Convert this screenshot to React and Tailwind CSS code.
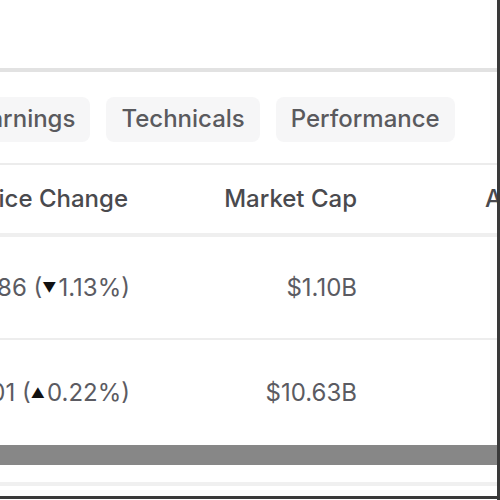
import React from "react";

const tabs = ["Earnings", "Technicals", "Performance"];

const rows = [
  { change: "-0.86", pct: "1.13%", up: false, cap: "$1.10B" },
  { change: "+0.01", pct: "0.22%", up: true, cap: "$10.63B" },
];

export default function App() {
  return (
    <div
      className="relative w-[500px] h-[500px] overflow-hidden bg-white border-r-[3px] border-[#3a3a3a] text-[#4f4f4f]"
      style={{ fontFamily: "Inter, 'Liberation Sans', sans-serif" }}
    >
      <div className="h-[68px]" />
      <div className="h-[4px] bg-[#e2e2e2]" />

      {/* tab strip */}
      <div className="h-[91px] flex items-center">
        <div className="flex gap-[16px] ml-[-40px] mt-[3px] shrink-0">
          {tabs.map((t) => (
            <div
              key={t}
              className="h-[45px] px-[15px] flex items-center shrink-0 rounded-lg bg-[#f6f6f7] text-[24px] font-medium text-[#5a5a5e] whitespace-nowrap"
            >
              {t}
            </div>
          ))}
        </div>
      </div>
      <div className="h-[2px] bg-[#ececec]" />

      {/* header */}
      <div className="h-[68px] flex items-center ml-[-200px] text-[24px] font-medium text-[#4a4a4e] whitespace-nowrap">
        <div className="w-[328px] shrink-0 text-right">Price Change</div>
        <div className="w-[229px] shrink-0 text-right">Market Cap</div>
        <div className="pl-[128px] shrink-0">Avg Volume</div>
      </div>
      <div className="h-[4px] bg-[#efefef]" />

      {rows.map((r, i) => (
        <div key={i}>
          <div
            className={`${i === 0 ? "h-[101px]" : "h-[105px]"} flex items-center ml-[-200px] text-[24px] text-[#5b5b62] whitespace-nowrap`}
          >
            <div className="w-[330px] shrink-0 text-right">
              {r.change} (
              <span className="text-[14px] text-[#111] align-[3px] mr-[2px]">
                {r.up ? "▲" : "▼"}
              </span>
              {r.pct})
            </div>
            <div className="w-[227px] shrink-0 text-right">{r.cap}</div>
          </div>
          {i === 0 && <div className="h-[2px] bg-[#ededed]" />}
        </div>
      ))}

      <div className="h-[20px] bg-[#878787]" />
      <div className="h-[17px]" />
      <div className="h-[4px] bg-[#f0f0f0]" />
      <div className="h-[10px]" />
      <div className="h-[3px] bg-[#3a3a3a]" />
    </div>
  );
}
